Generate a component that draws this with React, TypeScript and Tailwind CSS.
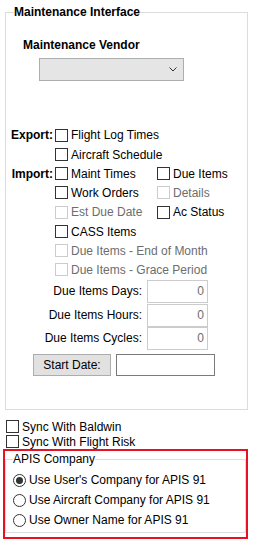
import React from "react"

const Check = ({ label, disabled, className = "" }: { label: string; disabled?: boolean; className?: string }) => {
  return (
    <div className={`flex items-center ${className}`}>
      <span className={`w-[13px] h-[13px] shrink-0 border bg-white ${disabled ? "border-[#cccccc]" : "border-[#333333]"}`}></span>
      <span className={`ml-[3px] whitespace-nowrap ${disabled ? "text-[#6d6d6d]" : "text-black"}`}>{label}</span>
    </div>
  )
}

const Radio = ({ label, checked }: { label: string; checked?: boolean }) => {
  return (
    <div className="flex items-center h-[20px]">
      <span className="w-[13px] h-[13px] shrink-0 rounded-full border border-[#333333] bg-white flex items-center justify-center">
        {checked && <span className="w-[7px] h-[7px] rounded-full bg-[#333333]"></span>}
      </span>
      <span className="ml-[3px] whitespace-nowrap">{label}</span>
    </div>
  )
}

const NumBox = ({ label, h }: { label: string; h: string }) => {
  return (
    <div className={`flex items-start ${h}`}>
      <span className="w-[141px] text-right pr-[5px] leading-[23px]">{label}</span>
      <div className="w-[61px] h-[23px] border border-[#cccccc] bg-white text-right pr-[3px] leading-[20px] text-[#6d6d6d]">0</div>
    </div>
  )
}

const App = () => {
  const rows = [
    { h: "h-[20px]", label: "Export:", a: { t: "Flight Log Times" } },
    { h: "h-[19px]", label: "", a: { t: "Aircraft Schedule" } },
    { h: "h-[19px]", label: "Import:", a: { t: "Maint Times" }, b: { t: "Due Items" } },
    { h: "h-[19px]", label: "", a: { t: "Work Orders" }, b: { t: "Details", d: true } },
    { h: "h-[20px]", label: "", a: { t: "Est Due Date", d: true }, b: { t: "Ac Status" } },
    { h: "h-[19px]", label: "", a: { t: "CASS Items" } },
    { h: "h-[19px]", label: "", a: { t: "Due Items - End of Month", d: true } },
    { h: "h-[19px]", label: "", a: { t: "Due Items - Grace Period", d: true } },
  ]

  return (
    <div className="w-[254px] h-[541px] bg-white text-black text-[12px] leading-[16px] overflow-hidden" style={{ fontFamily: '"Liberation Sans", Arial, sans-serif' }}>
      {/* Maintenance Interface group */}
      <fieldset className="ml-[5px] mt-[4px] w-[243px] border border-[#dcdcdc] p-0 pb-[33px]">
        <legend className="ml-[8px] px-0 font-bold leading-[16px]">Maintenance Interface</legend>
        <div className="pt-[17px] pl-[17px] font-bold">Maintenance Vendor</div>
        <div className="mt-[5px] ml-[33px] w-[145px] h-[23px] bg-[#e5e5e5] border border-[#adadad] flex items-center justify-end pr-[6px]">
          <svg width="8" height="5" viewBox="0 0 8 5">
            <polyline points="0.5,0.5 4,4 7.5,0.5" fill="none" stroke="#333" strokeWidth="1" />
          </svg>
        </div>

        <div className="mt-[44px]">
          {rows.map((r, i) => (
            <div key={i} className={`flex items-center ${r.h}`}>
              <span className="w-[47px] text-right font-bold">{r.label}</span>
              <Check className="ml-[2px] w-[102px]" label={r.a.t} disabled={r.a.d} />
              {r.b && <Check label={r.b.t} disabled={r.b.d} />}
            </div>
          ))}
        </div>

        <div className="mt-[1px]">
          <NumBox label="Due Items Days:" h="h-[24px]" />
          <NumBox label="Due Items Hours:" h="h-[23px]" />
          <NumBox label="Due Items Cycles:" h="h-[23px]" />
        </div>

        <div className="mt-[4px] flex items-center h-[22px]">
          <button className="ml-[27px] w-[78px] h-[22px] bg-[#e1e1e1] border border-[#adadad] text-[12px]">Start Date:</button>
          <div className="ml-[5px] w-[99px] h-[22px] border border-[#7a7a7a] bg-white"></div>
        </div>
      </fieldset>

      <div className="mt-[9px] ml-[6px]">
        <Check className="h-[15px]" label="Sync With Baldwin" />
        <Check className="h-[15px]" label="Sync With Flight Risk" />
      </div>

      {/* APIS Company */}
      <div className="ml-[3px] w-[245px] h-[90px] border-2 border-[#e81123]">
        <fieldset className="w-[241px] h-[82px] border border-[#dcdcdc] p-0">
          <legend className="ml-[7px] px-0 leading-[16px]">APIS Company</legend>
          <div className="pl-[7px] pt-[3px]">
            <Radio label="Use User's Company for APIS 91" checked />
            <Radio label="Use Aircraft Company for APIS 91" />
            <Radio label="Use Owner Name for APIS 91" />
          </div>
        </fieldset>
      </div>
    </div>
  )
}

export default App
